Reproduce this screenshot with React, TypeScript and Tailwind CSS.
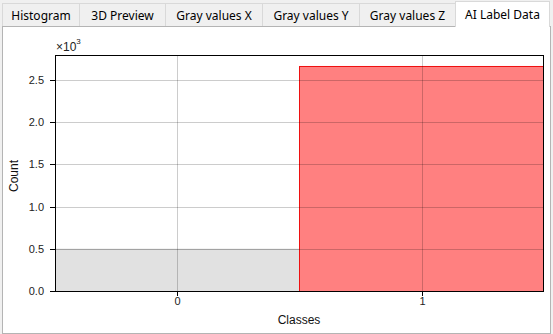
import React from "react";

const tabs = [
  { label: "Histogram", w: 77 },
  { label: "3D Preview", w: 86 },
  { label: "Gray values X", w: 97 },
  { label: "Gray values Y", w: 97 },
  { label: "Gray values Z", w: 96 },
  { label: "AI Label Data", w: 95, active: true },
];

// plot geometry (svg coords)
const L = 52;
const R = 541;
const T = 28;
const B = 264;
const PER = 84.4; // px per 1.0 (x10^3)
const y = (v: number) => B - v * PER;

function Chart() {
  const yTicks = [0, 0.5, 1, 1.5, 2, 2.5];
  const xTicks = [
    { v: "0", x: 174 },
    { v: "1", x: 419 },
  ];
  return (
    <svg width={548} height={306} className="block" style={{ fontFamily: "'Liberation Sans', Arial, sans-serif" }}>
      <rect x={L} y={T} width={R - L} height={B - T} fill="#ffffff" />
      {/* bars */}
      <rect x={L + 0.5} y={y(0.5) + 0.5} width={296 - L} height={B - y(0.5)} fill="#e1e1e1" stroke="#c4c4c4" />
      <rect x={296.5} y={y(2.666) + 0.5} width={R - 297} height={B - y(2.666)} fill="#ff8080" stroke="#ee1010" />
      {/* grid */}
      {yTicks.slice(1).map((v) => (
        <line key={v} x1={L} x2={R} y1={Math.round(y(v)) + 0.5} y2={Math.round(y(v)) + 0.5} stroke="#000" strokeOpacity={0.2} />
      ))}
      {xTicks.map((t) => (
        <line key={t.v} x1={t.x + 0.5} x2={t.x + 0.5} y1={T} y2={B} stroke="#000" strokeOpacity={0.2} />
      ))}
      {/* frame */}
      <rect x={L + 0.5} y={T + 0.5} width={R - L - 1} height={B - T} fill="none" stroke="#000" />
      {/* y ticks */}
      {yTicks.map((v) => (
        <g key={v}>
          <line x1={L - 5} x2={L} y1={Math.round(y(v)) + 0.5} y2={Math.round(y(v)) + 0.5} stroke="#000" />
          <text x={41} y={Math.round(y(v)) + 4} fontSize={11} textAnchor="end" fill="#222">
            {v.toFixed(1)}
          </text>
        </g>
      ))}
      {/* x ticks */}
      {xTicks.map((t) => (
        <g key={t.v}>
          <line x1={t.x + 0.5} x2={t.x + 0.5} y1={B} y2={B + 5} stroke="#000" />
          <text x={t.x + 0.5} y={278} fontSize={11} textAnchor="middle" fill="#222">
            {t.v}
          </text>
        </g>
      ))}
      <text x={53} y={24} fontSize={12} fill="#222">
        ×10
        <tspan fontSize={8} dy={-7}>3</tspan>
      </text>
      <text x={296} y={297} fontSize={12} textAnchor="middle" fill="#111">
        Classes
      </text>
      <text transform="translate(15 149) rotate(-90)" fontSize={12} textAnchor="middle" fill="#111">
        Count
      </text>
    </svg>
  );
}

export default function App() {
  return (
    <div className="w-[553px] h-[334px] bg-[#f0f0f0] overflow-hidden font-['Noto_Sans',sans-serif] text-[12px] text-black">
      <div className="flex h-[26px] items-end pl-[2px]">
        {tabs.map((t) =>
          t.active ? (
            <div
              key={t.label}
              style={{ width: t.w }}
              className="relative z-10 -mb-px flex h-[26px] items-center justify-center border border-b-0 border-[#d9d9d9] bg-white"
            >
              {t.label}
            </div>
          ) : (
            <div
              key={t.label}
              style={{ width: t.w }}
              className="flex h-[23px] items-center justify-center border border-r-0 border-b-0 border-[#d9d9d9] bg-[#f0f0f0] pt-px"
            >
              {t.label}
            </div>
          ),
        )}
      </div>
      <div className="ml-[2px] h-[308px] w-[549px] border border-[#b4b4b4] bg-white">
        <Chart />
      </div>
    </div>
  );
}
